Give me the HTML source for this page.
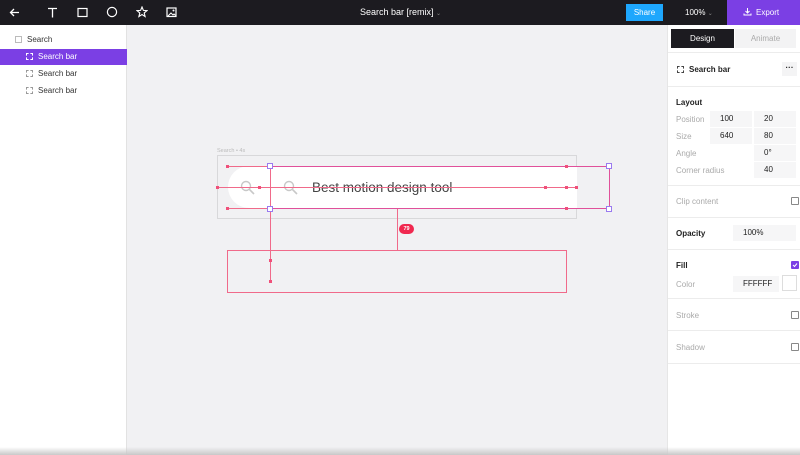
<!DOCTYPE html>
<html><head><style>
*{margin:0;padding:0;box-sizing:border-box}
body{width:800px;height:455px;overflow:hidden;font-family:"Liberation Sans",sans-serif;background:#f1f1f3;position:relative}
.top{position:absolute;left:0;top:0;width:800px;height:25px;background:#1c1b20;color:#fff}
.abs{position:absolute}
.left{position:absolute;left:0;top:25px;width:127px;height:430px;background:#fff;border-right:1px solid #e2e2e2}
.right{position:absolute;left:667px;top:25px;width:133px;height:430px;background:#fff;border-left:1px solid #e6e6e6;font-size:8px;color:#222}
.li{position:absolute;left:0;width:127px;height:16px;font-size:8px;color:#333;line-height:16px}
.ico{display:inline-block;width:7px;height:7px;border:1px dashed #999;vertical-align:-1px;margin-right:5px}
.lbl{position:absolute;left:8px;color:#aaa}
.fld{position:absolute;background:#f6f6f7;height:16px;line-height:16px;padding-left:10px;color:#222}
.sep{position:absolute;left:0;width:133px;height:1px;background:#ececec}
.cb{position:absolute;left:123px;width:8px;height:8px;border:1px solid #888;border-radius:1px}
.pk{position:absolute;background:#f06a8a}
.dot{position:absolute;width:3px;height:3px;background:#f0507a}
</style></head><body>
<div class="top">
<svg class="abs" style="left:9px;top:7px" width="11" height="11" viewBox="0 0 11 11"><path d="M10 5.5H1.5M5 2L1.5 5.5L5 9" stroke="#fff" stroke-width="1.3" fill="none"/></svg>
<svg class="abs" style="left:47px;top:7px" width="11" height="11"><path d="M1 1.5H10M5.5 1.5V10.5" stroke="#fff" stroke-width="1.3" fill="none"/></svg>
<svg class="abs" style="left:77px;top:7px" width="11" height="11"><rect x="1" y="1.5" width="9" height="8" stroke="#fff" stroke-width="1.2" fill="none"/></svg>
<svg class="abs" style="left:106px;top:6px" width="12" height="12"><circle cx="6" cy="6" r="4.6" stroke="#fff" stroke-width="1.2" fill="none"/></svg>
<svg class="abs" style="left:136px;top:6px" width="12" height="12"><path d="M6 1L7.4 4.4L11 4.6L8.2 6.9L9.1 10.5L6 8.5L2.9 10.5L3.8 6.9L1 4.6L4.6 4.4Z" stroke="#fff" stroke-width="1.1" fill="none"/></svg>
<svg class="abs" style="left:166px;top:7px" width="11" height="11"><rect x="1" y="1" width="9" height="8.5" stroke="#fff" stroke-width="1.2" fill="none"/><path d="M2 9L5 6L7 8L8 7L9.5 8.5" stroke="#fff" fill="none"/><circle cx="7.5" cy="3.5" r="1" fill="#fff"/></svg>
<div class="abs" style="left:360px;top:7px;font-size:9px">Search bar [remix] <span style="color:#888;font-size:6px">⌄</span></div>
<div class="abs" style="left:626px;top:4px;width:37px;height:17px;background:#1ea7fd;font-size:8px;text-align:center;line-height:17px">Share</div>
<div class="abs" style="left:685px;top:8px;font-size:8px">100% <span style="color:#888;font-size:6px">⌄</span></div>
<div class="abs" style="left:727px;top:0;width:73px;height:25px;background:#7b3fe4;font-size:8px;line-height:25px;padding-left:16px">
<svg style="vertical-align:-1px;margin-right:4px" width="9" height="9"><path d="M4.5 1V6M2.5 4L4.5 6L6.5 4M1 6.5V8H8V6.5" stroke="#fff" fill="none"/></svg>Export</div>
</div>
<div class="left">
<div class="li" style="top:7px;padding-left:15px"><span class="ico" style="border-style:solid;border-color:#bbb"></span>Search</div>
<div class="li" style="top:24px;padding-left:26px;background:#7b3fe4;color:#fff"><span class="ico" style="border-color:#fff"></span>Search bar</div>
<div class="li" style="top:41px;padding-left:26px"><span class="ico"></span>Search bar</div>
<div class="li" style="top:58px;padding-left:26px"><span class="ico"></span>Search bar</div>
</div>
<div class="abs" style="left:217px;top:148px;font-size:5.5px;color:#bbb">Search • 4s</div>
<div class="abs" style="left:217px;top:155px;width:360px;height:64px;border:1px solid #d8d8da"></div>
<div class="abs" style="left:228px;top:166px;width:349px;height:42px;background:#fff;border-radius:21px 0 0 21px"></div>
<svg class="abs" style="left:240px;top:180px" width="16" height="16"><circle cx="6" cy="6" r="4.5" stroke="#c8c8c8" stroke-width="1.4" fill="none"/><path d="M9.3 9.3L14 14" stroke="#c8c8c8" stroke-width="1.6"/></svg>
<svg class="abs" style="left:283px;top:180px" width="16" height="16"><circle cx="6" cy="6" r="4.5" stroke="#c8c8c8" stroke-width="1.4" fill="none"/><path d="M9.3 9.3L14 14" stroke="#c8c8c8" stroke-width="1.6"/></svg>
<div class="abs" style="left:312px;top:180px;font-size:13.5px;color:#444">Best motion design tool</div>
<div class="abs" style="left:270px;top:166px;width:340px;height:43px;border:1px solid #e0509a"></div>
<div class="pk" style="left:228px;top:166px;width:42px;height:1px"></div>
<div class="pk" style="left:228px;top:208px;width:42px;height:1px"></div>
<div class="pk" style="left:217px;top:187px;width:360px;height:1px"></div>
<div class="pk" style="left:270px;top:166px;width:1px;height:116px"></div>
<div class="pk" style="left:397px;top:209px;width:1px;height:41px"></div>
<div class="abs" style="left:227px;top:250px;width:340px;height:43px;border:1px solid #f06a8a"></div>
<div class="abs" style="left:399px;top:224px;width:15px;height:10px;border-radius:5px;background:#f0284f;color:#fff;font-size:5.5px;text-align:center;line-height:10px;font-weight:bold">79</div>
<div class="abs" style="left:267px;top:163px;width:6px;height:6px;border:1px solid #9a7aef;background:#fff"></div>
<div class="abs" style="left:267px;top:206px;width:6px;height:6px;border:1px solid #9a7aef;background:#fff"></div>
<div class="abs" style="left:606px;top:163px;width:6px;height:6px;border:1px solid #9a7aef;background:#fff"></div>
<div class="abs" style="left:606px;top:206px;width:6px;height:6px;border:1px solid #9a7aef;background:#fff"></div>
<div class="dot" style="left:226px;top:165px"></div><div class="dot" style="left:226px;top:207px"></div>
<div class="dot" style="left:565px;top:165px"></div><div class="dot" style="left:565px;top:207px"></div>
<div class="dot" style="left:216px;top:186px"></div><div class="dot" style="left:258px;top:186px"></div>
<div class="dot" style="left:544px;top:186px"></div><div class="dot" style="left:565px;top:186px"></div><div class="dot" style="left:575px;top:186px"></div>
<div class="dot" style="left:269px;top:259px"></div><div class="dot" style="left:269px;top:280px"></div>
<div class="right">
<div class="abs" style="left:3px;top:4px;width:63px;height:19px;background:#1c1b20;color:#fff;text-align:center;line-height:19px">Design</div>
<div class="abs" style="left:67px;top:4px;width:61px;height:19px;background:#f3f3f4;color:#aaa;text-align:center;line-height:19px">Animate</div>
<div class="sep" style="top:27px"></div>
<div class="abs" style="left:9px;top:40px;font-weight:bold"><span class="ico" style="border-color:#444"></span>Search bar</div>
<div class="abs" style="left:114px;top:37px;width:15px;height:14px;background:#f4f4f5;text-align:center;line-height:12px;font-weight:bold">···</div>
<div class="sep" style="top:61px"></div>
<div class="abs" style="left:8px;top:73px;font-weight:bold">Layout</div>
<div class="lbl" style="top:90px">Position</div><div class="fld" style="left:42px;top:86px;width:42px">100</div><div class="fld" style="left:86px;top:86px;width:42px">20</div>
<div class="lbl" style="top:107px">Size</div><div class="fld" style="left:42px;top:103px;width:42px">640</div><div class="fld" style="left:86px;top:103px;width:42px">80</div>
<div class="lbl" style="top:124px">Angle</div><div class="fld" style="left:86px;top:120px;width:42px">0°</div>
<div class="lbl" style="top:141px">Corner radius</div><div class="fld" style="left:86px;top:137px;width:42px">40</div>
<div class="sep" style="top:160px"></div>
<div class="lbl" style="top:172px">Clip content</div><div class="cb" style="top:172px"></div>
<div class="sep" style="top:192px"></div>
<div class="abs" style="left:8px;top:204px;font-weight:bold">Opacity</div><div class="fld" style="left:65px;top:200px;width:63px">100%</div>
<div class="sep" style="top:224px"></div>
<div class="abs" style="left:8px;top:236px;font-weight:bold">Fill</div><div class="cb" style="top:236px;background:#7b3fe4;border-color:#7b3fe4"><svg style="position:absolute;left:0;top:0" width="6" height="6"><path d="M1 3L2.5 4.5L5 1.5" stroke="#fff" fill="none"/></svg></div>
<div class="lbl" style="top:255px">Color</div><div class="fld" style="left:65px;top:251px;width:46px">FFFFFF</div>
<div class="abs" style="left:114px;top:250px;width:15px;height:16px;border:1px solid #ddd;background:#fff"></div>
<div class="sep" style="top:273px"></div>
<div class="lbl" style="top:286px">Stroke</div><div class="cb" style="top:286px"></div>
<div class="sep" style="top:305px"></div>
<div class="lbl" style="top:318px">Shadow</div><div class="cb" style="top:318px"></div>
<div class="sep" style="top:338px"></div>
</div>
<div class="abs" style="left:0;top:447px;width:800px;height:8px;background:linear-gradient(#fff0,#c8c8c8)"></div>
</body></html>
